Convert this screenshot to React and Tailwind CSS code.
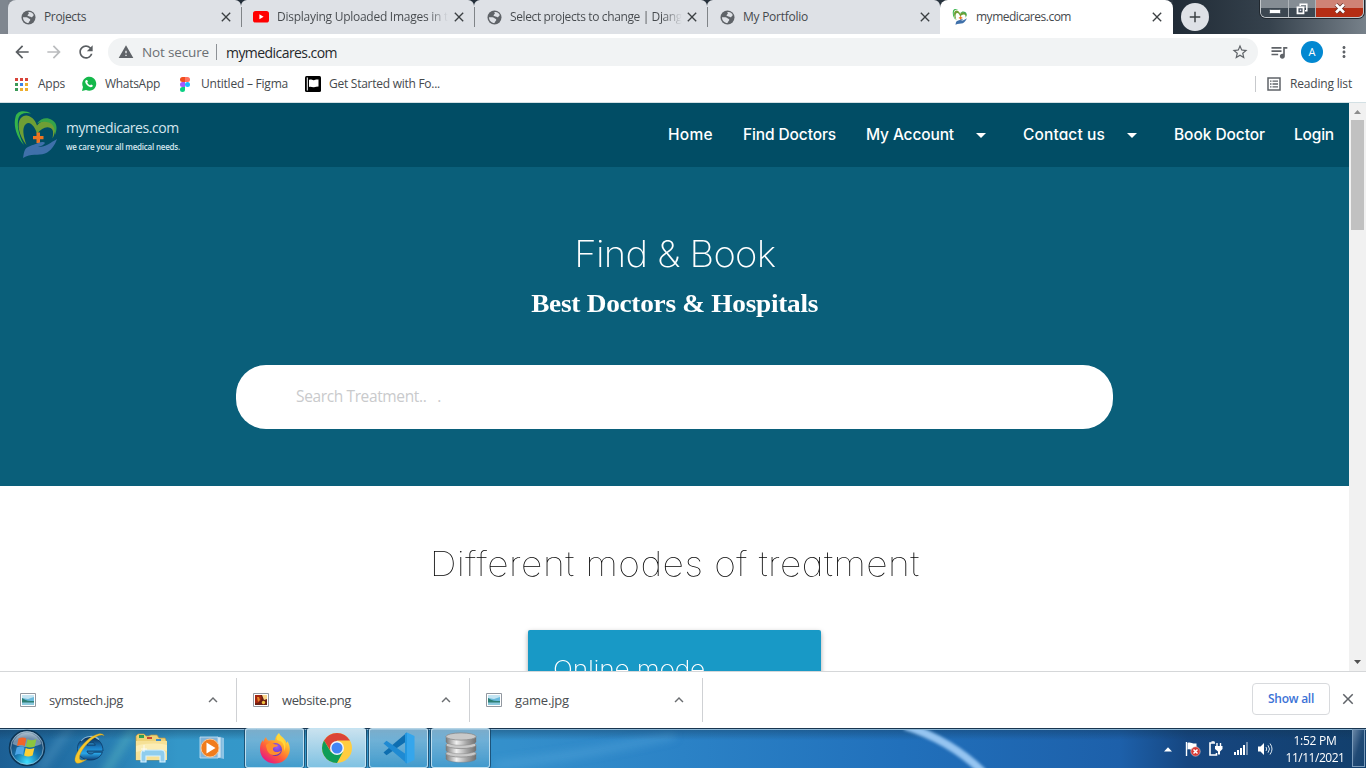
import { useLayoutEffect, useRef } from "react";
import {
  MdClose,
  MdArrowBack,
  MdArrowForward,
  MdRefresh,
  MdWarning,
  MdStarBorder,
  MdQueueMusic,
  MdMoreVert,
  MdKeyboardArrowUp,
  MdAdd,
} from "react-icons/md";

const UI = "font-['Open_Sans','Noto_Sans',sans-serif]";
const GEO = "font-['Inter',sans-serif] [font-feature-settings:'cv11']";

/* One line of text whose tracking is adjusted so it spans exactly `w` pixels.
   `stretch` is the horizontal scale that the class list applies, if any. */
function Fit({ w, stretch = 1, className = "", children }) {
  const ref = useRef(null);
  useLayoutEffect(() => {
    const el = ref.current;
    el.style.letterSpacing = "0px";
    const natural = el.getBoundingClientRect().width;
    const count = el.textContent.length;
    el.style.letterSpacing = `${(w - natural) / count / stretch}px`;
  }, [w, stretch]);
  return (
    <span ref={ref} className={`inline-block shrink-0 whitespace-pre ${className}`}>
      {children}
    </span>
  );
}

function HeartLogo({ className }) {
  return (
    <svg viewBox="0 0 45 48" className={className}>
      <path d="M10 34C3 27-1 15 1.500 6 3-.5 11-1 17 2.500 11 1 6 2.500 4.500 7 2.500 14 5 25 10 34z" fill="#35b44a" />
      <path d="M12.500 34C5 25 2.500 13 6.500 7.500c5-6.500 14-1.500 16.500 7 3.500-4.500 9-5.500 13-4 7 2 6 11 2.500 17 1-6 1-9-2-10.500-4-2-9 0-13.500 6C21.500 17 16.500 9.500 12 13c-4.500 3.500-2.500 13 .5 21z" fill="#6f9f35" />
      <path d="M23 12.500c4-5.500 10-6.500 15-3.500 6 3.500 5 10 3 15 0-7-2-11-6-12.500-4-1.300-8-.8-12 1z" fill="#35a44a" />
      <path d="M22.500 21.500h3.500v3.500h3.500v3.200h-3.500v3.800h-3.500v-3.800H19V25h3.500z" fill="#ee7421" />
      <path d="M9 47c1-5 1-9 5-11 5-2.500 7-2.500 10-4 3-1.300 6-1.500 7 0-1 2-4 3-7 4 7 .5 12-4 19-8-2 6-6 12-12 14.500C24 45 17 42 9 47z" fill="#3f70aa" />
    </svg>
  );
}

function GlobeIcon() {
  return (
    <svg viewBox="0 0 15 15" className="size-[15px]">
      <circle cx="7.500" cy="7.500" r="7" fill="#5f6368" />
      <path d="M7.200 2.200c2.500-.8 5 .8 5.700 3.300-.8 0-1.300.6-1.500 1.500-.8.4-1.800.2-2.300-.6-.9.2-2.200.2-2.500-.8C6.400 4.700 7.600 4.400 7.900 3.600z" fill="#dee1e6" />
      <path d="M2 7.300h3.500c1.500 0 1.700 1.200 2.800 1.400 1 .3 1.300 1.200.6 2-.6.700-1.100 1.500-1.400 2.400C4.400 13 1.900 10.500 2 7.300z" fill="#dee1e6" />
    </svg>
  );
}

function YoutubeIcon() {
  return (
    <svg viewBox="0 0 16 12" className="h-3 w-4">
      <rect width="16" height="11.5" rx="2.6" fill="#f00" />
      <path d="M6.4 3.3v5l4.2-2.5z" fill="#fff" />
    </svg>
  );
}

function Tab({ icon, title, w, fade, line, first }) {
  return (
    <div className={`relative flex h-[34px] w-[233px] shrink-0 items-center bg-[#dee1e6] pl-3 ${first ? "rounded-tl-lg" : "rounded-tl-md"} rounded-tr-md`}>
      {line && <span className="absolute left-0 top-[7px] h-5 w-px bg-[#808488]" />}
      <span className="flex w-4 justify-center">{icon}</span>
      <div className="ml-2 flex h-5 w-[173px] items-center">
        <Fit w={w} className={`text-[12px] leading-5 ${fade ? "bg-linear-to-r from-[#45494d] from-88% to-[#dee1e6] to-100% bg-clip-text text-transparent" : "text-[#45494d]"}`}>
          {title}
        </Fit>
      </div>
      <MdClose className="ml-px size-4 text-[#3c4043]" />
    </div>
  );
}

function TabStrip() {
  return (
    <div className="flex h-[34px] bg-linear-to-r from-[#828890] from-0% via-[#222c37] via-10% to-[#2b3641]">
      <div className="h-[34px] w-2 shrink-0 rounded-br-lg bg-[#7f868f]" />
      <Tab first icon={<GlobeIcon />} title="Projects" w={42} />
      <Tab line icon={<YoutubeIcon />} title="Displaying Uploaded Images in t" w={171} fade />
      <Tab line icon={<GlobeIcon />} title="Select projects to change | Djang" w={172} fade />
      <Tab line icon={<GlobeIcon />} title="My Portfolio" w={65} />
      <div className="flex h-[34px] w-[233px] shrink-0 items-center rounded-t-lg bg-white pl-3">
        <HeartLogo className="size-4" />
        <Fit w={95} className="ml-2 text-[12px] text-[#45494d]">mymedicares.com</Fit>
        <MdClose className="ml-[78px] size-4 text-[#3c4043]" />
      </div>
      <div className="flex flex-1 bg-linear-to-r from-[#202b36] via-[#36424d] to-[#77818a]">
        <div className="ml-2 mt-[3px] flex size-7 shrink-0 items-center justify-center rounded-full bg-[#dee1e6]">
          <MdAdd className="size-[18px] text-[#3c4043]" />
        </div>
        <div className="ml-[51px] flex h-[18px] w-[104px] overflow-hidden rounded-b-md border border-t-0 border-[#c3c8cc] ring-1 ring-[#20272e]">
          <div className="flex w-[28px] items-center justify-center border-r border-[#aeb4b9] bg-linear-to-b from-[#858d94] from-50% to-[#3c4751] to-50%">
            <svg viewBox="0 0 12 5" className="mt-1.5 h-[5px] w-3"><rect x=".5" y=".5" width="11" height="4" rx="1" fill="#fff" stroke="#555e66" /></svg>
          </div>
          <div className="flex w-[27px] items-center justify-center border-r border-[#aeb4b9] bg-linear-to-b from-[#858d94] from-50% to-[#3c4751] to-50%">
            <svg viewBox="0 0 12 12" className="h-3 w-3"><path d="M4.2 3V1.2h6.6v6.6H9" fill="none" stroke="#fff" strokeWidth="1.5" /><path d="M1.5 4.3h6v6h-6z" fill="#46515b" stroke="#fff" strokeWidth="1.8" /><path d="M3.8 6.6h1.5v1.5H3.8z" fill="#dde" /></svg>
          </div>
          <div className="flex flex-1 items-center justify-center bg-linear-to-b from-[#cf8375] from-50% to-[#b52d14] to-50%">
            <svg viewBox="0 0 12 11" className="h-[11px] w-3"><path d="M2 1.5l8 8M10 1.5l-8 8" stroke="#663029" strokeWidth="4" /><path d="M2 1.5l8 8M10 1.5l-8 8" stroke="#fff" strokeWidth="2.6" /></svg>
          </div>
        </div>
      </div>
    </div>
  );
}

function Toolbar() {
  return (
    <div className="flex h-9 items-center bg-white">
      <MdArrowBack className="ml-[12px] size-5 text-[#5a5e62]" />
      <MdArrowForward className="ml-[12px] size-5 text-[#babcbe]" />
      <MdRefresh className="ml-[12px] size-5 text-[#5a5e62]" />
      <div className="ml-[12px] flex h-7 w-[1150px] items-center rounded-full bg-[#f1f3f4]">
        <MdWarning className="ml-[10px] size-4 text-[#5f6368]" />
        <Fit w={67} className="ml-2 text-[13.5px] text-[#6b6f73]">Not secure</Fit>
        <span className="ml-[7px] h-4 w-px bg-[#8d9196]" />
        <Fit w={111} className="ml-[9px] text-[14px] text-[#26292c]">mymedicares.com</Fit>
        <MdStarBorder className="ml-auto mr-[9px] size-[18px] text-[#5f6368]" />
      </div>
      <MdQueueMusic className="ml-[11px] size-5 text-[#5f6368]" />
      <span className="ml-[12px] flex size-[22px] items-center justify-center rounded-full bg-[#0288d1] text-[11px] text-white">A</span>
      <MdMoreVert className="ml-[12px] size-[18px] text-[#5f6368]" />
    </div>
  );
}

function AppsIcon() {
  const colors = ["#d8443a", "#d8443a", "#d8443a", "#3b9a58", "#3b82e8", "#eeae2e", "#3b9a58", "#eeae2e", "#eeae2e"];
  return (
    <span className="ml-[15px] grid grid-cols-3 gap-[2px]">
      {colors.map((c, i) => (
        <span key={i} className="size-[3px]" style={{ backgroundColor: c }} />
      ))}
    </span>
  );
}

function Bookmarks() {
  const label = "text-[12px] text-[#45494d]";
  return (
    <div className="flex h-[33px] items-center border-b border-[#d3e0e4] bg-white pb-1">
      <AppsIcon />
      <Fit w={27} className={`ml-[10px] ${label}`}>Apps</Fit>
      <svg viewBox="0 0 16 16" className="ml-[16px] size-4">
        <path d="M1 15l1-4a7 7 0 1 1 3 3z" fill="#14b84b" />
        <path d="M5 4.3c.6-.6 1.1-.4 1.4.3l.5 1c.1.5-.7.9-.6 1.2.6 1.1 1.4 1.900 2.600 2.400.4.1.8-1 1.200-.8l1.500.8c.4.3-.1 1.700-.9 1.900C8 11.800 4 8 4.200 5.600c0-.5.4-1 .8-1.300z" fill="#fff" />
      </svg>
      <Fit w={55} className={`ml-[8px] ${label}`}>WhatsApp</Fit>
      <svg viewBox="0 0 10 15" className="ml-[20px] h-[15px] w-[10px]">
        <path d="M2.500 0H5v5H2.500a2.500 2.500 0 0 1 0-5z" fill="#f24e1e" />
        <path d="M5 0h2.500a2.500 2.500 0 0 1 0 5H5z" fill="#ff7262" />
        <path d="M2.500 5H5v5H2.500a2.500 2.500 0 0 1 0-5z" fill="#a259ff" />
        <circle cx="7.500" cy="7.500" r="2.500" fill="#1abcfe" />
        <path d="M2.500 10H5v2.500A2.500 2.500 0 1 1 2.500 10z" fill="#0acf83" />
      </svg>
      <Fit w={87} className={`ml-[11px] ${label}`}>Untitled – Figma</Fit>
      <svg viewBox="0 0 16 16" className="ml-[17px] size-4">
        <rect width="16" height="16" rx="1.500" fill="#000" />
        <path d="M2.300 1.500v13" stroke="#fff" strokeWidth="1" />
        <path d="M4 4c2-1.500 3.500.8 5.500 0s2.500-.5 4-.6v7.100c-1.500.2-3 .3-4.500.7-1.800.4-3-1-5-.2z" fill="#fff" />
      </svg>
      <Fit w={111} className={`ml-2 ${label}`}>Get Started with Fo...</Fit>
      <span className="ml-auto h-4 w-px bg-[#c7c9cc]" />
      <svg viewBox="0 0 14 14" className="ml-[11px] size-[14px]">
        <path d="M1 1h12v12H1z" fill="none" stroke="#5f6368" strokeWidth="1.500" />
        <path d="M3 4.200h1.500M3 7h1.500M3 9.800h1.500M5.500 4.200H11M5.500 7H11M5.500 9.800H11" stroke="#5f6368" strokeWidth="1.300" />
      </svg>
      <Fit w={62} className={`ml-[9px] mr-[14px] ${label}`}>Reading list</Fit>
    </div>
  );
}

function Caret({ className }) {
  return (
    <svg viewBox="0 0 10 5" className={`h-[5px] w-[10px] ${className}`}>
      <path d="M0 0h10L5 5z" fill="#fff" />
    </svg>
  );
}

function SiteHeader() {
  return (
    <header className="flex h-16 items-center bg-[#014d65]">
      <HeartLogo className="ml-[14px] h-[48px] w-[45px]" />
      <div className="ml-[7px] flex flex-col text-[#d4e6ee]">
        <Fit w={114} className="text-[14px] font-medium leading-[19px]">mymedicares.com</Fit>
        <Fit w={114} className="mt-[3px] text-[8px] font-semibold leading-[13px]">we care your all medical needs.</Fit>
      </div>
      <nav className={`${GEO} ml-auto mr-[15px] flex items-center text-[15.5px] font-medium text-white`}>
        <Fit w={45}>Home</Fit>
        <Fit w={93} className="ml-[30px]">Find Doctors</Fit>
        <Fit w={88} className="ml-[30px]">My Account</Fit>
        <Caret className="ml-[22px]" />
        <Fit w={82} className="ml-[37px]">Contact us</Fit>
        <Caret className="ml-[22px]" />
        <Fit w={91} className="ml-[37px]">Book Doctor</Fit>
        <Fit w={40} className="ml-[29px]">Login</Fit>
      </nav>
    </header>
  );
}

function Page() {
  return (
    <div className="flex h-[568px] overflow-hidden">
      <main className="h-[568px] w-[1349px] shrink-0 overflow-hidden bg-white">
        <SiteHeader />
        <section className="flex h-[319px] flex-col items-center bg-[#0a5f7a] text-white">
          <h1 className={`${GEO} mt-[62px] h-[50px] text-[36px] font-extralight leading-[50px]`}>
            <Fit w={201} stretch={1.06} className="scale-x-[1.06]">Find &amp; Book</Fit>
          </h1>
          <h2 className="mt-[7px] h-9 font-['Liberation_Serif',serif] text-[26px] font-bold leading-9">
            <Fit w={287} stretch={1.05} className="scale-x-[1.05]">Best Doctors &amp; Hospitals</Fit>
          </h2>
          <div className="mt-[43px] flex h-16 w-[877px] items-center rounded-[30px] bg-white pl-[60px]">
            <Fit w={145} className="text-[15.5px] text-[#c9cacc]">{"Search Treatment..   ."}</Fit>
          </div>
        </section>
        <section className="flex flex-col items-center">
          <h2 className={`${GEO} mt-[53px] h-[50px] text-[34px] font-thin leading-[50px] text-black`}>
            <Fit w={490} stretch={1.1} className="scale-x-110">Different modes of treatment</Fit>
          </h2>
          <div className="mt-[41px] h-60 w-[293px] rounded-[2px] bg-[#1899c6] pl-[25px] pt-[22px] shadow-[0_2px_5px_rgba(0,0,0,.35)]">
            <Fit w={152} stretch={1.1} className={`${GEO} origin-left scale-x-110 text-[24px] font-extralight leading-9 text-white`}>Online mode</Fit>
          </div>
        </section>
      </main>
      <div className="flex w-[17px] flex-col items-center bg-[#f1f1f1]">
        <svg viewBox="0 0 7 4" className="mt-[7px] h-1 w-[7px]"><path d="M0 4h7L3.500 0z" fill="#8c8c8c" /></svg>
        <div className="mt-[6px] h-[110px] w-[13px] bg-[#c1c1c1]" />
        <svg viewBox="0 0 7 4" className="mb-[7px] mt-auto h-1 w-[7px]"><path d="M0 0h7L3.500 4z" fill="#505050" /></svg>
      </div>
    </div>
  );
}

function PictureIcon({ warm }) {
  return (
    <svg viewBox="0 0 16 14" className="h-[14px] w-4">
      <path d="M.5.500h15v13H.500z" fill="#fff" stroke="#9298a0" />
      <path d="M2 2h12v10H2z" fill={warm ? "#6b1f12" : "#69b9dc"} />
      {warm ? (
        <>
          <path d="M2 2h5c2 1 2 3 1 5L5 10H2z" fill="#a3260f" />
          <path d="M4 4h2l1 3-2 2z" fill="#e8862a" />
          <path d="M9 2h5v4l-3 1z" fill="#f8d58a" />
          <circle cx="10.500" cy="9.500" r="1.700" fill="#f0c040" />
        </>
      ) : (
        <>
          <path d="M2 2h12v2L8 6 2 5z" fill="#c3e4f2" />
          <path d="M2 5c4 3 8 3 12 3v2H2z" fill="#2d7f74" />
          <path d="M2 9.500h12V12H2z" fill="#8cc9de" />
        </>
      )}
    </svg>
  );
}

function Download({ name, w, warm, first }) {
  return (
    <div className={`flex h-[44px] shrink-0 items-center border-r border-[#cfd1d4] ${first ? "w-[237px] pl-5" : "w-[233px] pl-4"}`}>
      <PictureIcon warm={warm} />
      <Fit w={w} className="ml-[13px] pt-[2px] text-[13px] text-[#4a4d51]">{name}</Fit>
      <MdKeyboardArrowUp className="ml-auto mr-[14px] size-[18px] text-[#6a6d70]" />
    </div>
  );
}

function DownloadBar() {
  return (
    <div className="flex h-[57px] items-center border-t border-[#d5d7d9] bg-white">
      <Download first name="symstech.jpg" w={74} />
      <Download name="website.png" w={69} warm />
      <Download name="game.jpg" w={54} />
      <button className="mb-[2px] ml-auto flex h-8 w-[78px] items-center justify-center rounded-[4px] border border-[#d8dadd] bg-white text-[12px] font-semibold text-[#3c72d6]">
        <Fit w={46}>Show all</Fit>
      </button>
      <MdClose className="mb-[2px] ml-[9px] mr-[9px] size-[18px] text-[#5f6368]" />
    </div>
  );
}

function TaskButton({ active, children }) {
  return (
    <div className={`mr-[3px] flex h-10 w-[59px] items-center justify-center rounded-[3px] border border-[#d5ebf6]/80 ring-1 ring-[#123a58]/70 ${active ? "bg-linear-to-b from-[#c9e2ef] to-[#7fc2e2]" : "bg-linear-to-b from-[#a2c9e0]/70 to-[#4ba0ce]/60"}`}>
      {children}
    </div>
  );
}

function StartOrb() {
  return (
    <svg viewBox="0 0 38 38" className="ml-2 size-[38px]">
      <defs>
        <radialGradient id="orb" cx=".5" cy=".9" r=".9">
          <stop offset="0" stopColor="#3fe0ff" />
          <stop offset=".4" stopColor="#1674ac" />
          <stop offset=".75" stopColor="#1b4a74" />
          <stop offset="1" stopColor="#9db5c6" />
        </radialGradient>
      </defs>
      <circle cx="19" cy="19" r="17.500" fill="url(#orb)" stroke="#0d3555" strokeWidth="1.500" />
      <circle cx="19" cy="19" r="16.300" fill="none" stroke="#b9d3e2" strokeWidth=".8" opacity=".7" />
      <path d="M4.500 15a15 15 0 0 1 29 0c-8 4-21 4-29 0z" fill="#fff" opacity=".38" />
      <path d="M10.500 9.500c3-1.500 5.500-1.300 7.800 0L16.800 17c-2.500-1.300-5-1.200-7.800 0z" fill="#f0652a" />
      <path d="M19.500 10.300c2.500 1.300 5.500 1.200 9-.3L26.700 17.500c-3 1.300-6 1.500-8.700.1z" fill="#8cc63f" />
      <path d="M8.700 18.400c2.800-1.200 5.300-1.300 7.800 0L14.900 26c-2.500-1.400-5-1.200-8 .2z" fill="#4da6e8" />
      <path d="M17.700 19c2.600 1.400 5.500 1.200 8.700-.1l-1.800 7.600c-3 1.300-5.800 1.400-8.500 0z" fill="#fcd034" />
    </svg>
  );
}

function ExplorerE() {
  return (
    <svg viewBox="0 0 34 34" className="ml-[26px] size-[34px]">
      <defs>
        <linearGradient id="ie" x1="0" y1="0" x2="0" y2="1">
          <stop offset="0" stopColor="#0d2f55" />
          <stop offset=".45" stopColor="#1b7fc6" />
          <stop offset=".7" stopColor="#2aa6e6" />
          <stop offset="1" stopColor="#0f3f78" />
        </linearGradient>
      </defs>
      <path d="M31 20H15c.4 3.500 5.500 4 7.300 1.200h8C27 32.500 5.500 32 5.500 17.500S31 1.500 31 20zM15 14.200h8.300c-.6-3.800-7.500-3.800-8.300 0z" fill="url(#ie)" stroke="#0d3a66" strokeWidth=".8" />
      <path d="M9 10c4-5 13-6.500 18-1.500" fill="none" stroke="#b4dcf4" strokeWidth="1.200" opacity=".7" />
      <path d="M32 5c-1-4-9-2.500-17 4.500S1 27 3.500 31c1.500 2.500 6 1 11-2.500C9.500 30 7 29.500 7.500 26 8 21 14 13 20.500 8S31 3.500 32 5z" fill="#f5c72e" stroke="#c2921c" strokeWidth=".4" />
    </svg>
  );
}

function FolderIcon() {
  return (
    <svg viewBox="0 0 34 32" className="ml-[28px] h-8 w-[34px]">
      <path d="M2 28V4l2-2h6l2 2h3l2-1h6l2 3h6l1 2v20z" fill="#eed276" stroke="#b79440" strokeWidth=".7" />
      <path d="M5 3h5v3H5z" fill="#2f9e55" /><path d="M13 5h5v2h-5z" fill="#c94731" /><path d="M22 7h5v2h-5z" fill="#3a8bc9" />
      <path d="M2 9h31v19H2z" fill="#f6e196" />
      <path d="M2 14c10-3 20-3 31-1v6c-11-3-21-2-31 1z" fill="#fbedb4" />
      <path d="M7 30v-8c0-3 2-4 4-4h16c3 0 4 2 4 4v8h-5v-6H12v6z" fill="#8fcdee" stroke="#d5f1ff" strokeWidth="1.200" />
      <path d="M10 13v7M7 17h6" stroke="#fff" strokeWidth=".8" />
    </svg>
  );
}

function MediaPlayerIcon() {
  return (
    <svg viewBox="0 0 28 24" className="ml-[31px] h-6 w-7">
      <path d="M21 1l4 1v21l-4-1z" fill="#9fcdea" opacity=".85" />
      <path d="M18 1h4v21h-4z" fill="#cfe6f4" stroke="#5d98c4" strokeWidth=".5" />
      <path d="M1 1h18v21H1z" fill="#7fb4da" stroke="#c8e2f4" strokeWidth=".8" />
      <circle cx="11" cy="12" r="9" fill="#f07c1d" stroke="#f8c695" strokeWidth="1" />
      <path d="M7.500 6.500v11l9-5.500z" fill="#fff" />
    </svg>
  );
}

function FirefoxIcon() {
  return (
    <svg viewBox="0 0 32 32" className="size-8">
      <defs>
        <linearGradient id="ff" x1=".85" y1=".05" x2=".2" y2=".95">
          <stop offset="0" stopColor="#fff04a" /><stop offset=".35" stopColor="#ffa52a" /><stop offset=".65" stopColor="#ff5a3c" /><stop offset="1" stopColor="#e31587" />
        </linearGradient>
        <radialGradient id="fp" cx=".6" cy=".3" r=".8">
          <stop offset="0" stopColor="#9a5cf5" /><stop offset="1" stopColor="#5a2ca8" />
        </radialGradient>
      </defs>
      <path d="M20 1c1 3 4 4 6 7 1 1 1 2 1.500 3 1-1 .7-2 .7-2 3 4 3 9 2 12C28 28 22 32 15 31.500 7 31 1 25 1 17c0-4 1-7 3-9 0 0 0 1 .6 2C5 7 6.500 6 7 5c.3 2 1.500 3.300 3 3.800 2-.7 4-.6 6-.2C16 5 18 3 20 1z" fill="url(#ff)" />
      <circle cx="16.500" cy="17.500" r="6.500" fill="url(#fp)" />
      <path d="M7 13c3-3 7-2 9-.5 3 .2 4 1.500 1 2.200-2 0-3.500 1.300-3 3 1 3 5 3 8 1-2 6-12 6-14-1-.5-2-1-3-1-4.700z" fill="#ff8f2c" />
      <path d="M18 8c6 1 8 5 7 11 2-3 2-8-1-11-2-2-3-4-4-6-2 2-3 4-2 6z" fill="#ffda3a" />
    </svg>
  );
}

function ChromeIcon() {
  return (
    <svg viewBox="0 0 30 30" className="size-[30px]">
      <circle cx="15" cy="15" r="15" fill="#ffcd40" />
      <path d="M9 18.500L2.010 7.500A15 15 0 0 1 27.990 7.500H15z" fill="#db4437" />
      <path d="M21.200 18.500L15 30A15 15 0 0 1 2.010 7.500L8.800 18.800z" fill="#0f9d58" />
      <circle cx="15" cy="15" r="7" fill="#f1f5f8" />
      <circle cx="15" cy="15" r="5.500" fill="#4285f4" />
    </svg>
  );
}

function CodeIcon() {
  return (
    <svg viewBox="0 0 32 32" className="size-8">
      <path d="M.5 20.500l3 2.800L24 9V.500z" fill="#0e6eb0" />
      <path d="M.5 11.500l3-2.800L24 23v8.500z" fill="#1f8ad2" />
      <path d="M24 .500l7.500 3.500v24L24 31.500z" fill="#35a6ec" />
      <path d="M22 1.500l2-1v31l-2-1z" fill="#2397df" />
    </svg>
  );
}

function DatabaseIcon() {
  return (
    <svg viewBox="0 0 32 32" className="size-8">
      <defs>
        <linearGradient id="db"><stop offset="0" stopColor="#7a7a7a" /><stop offset=".35" stopColor="#f0f0f0" /><stop offset=".7" stopColor="#a3a3a3" /><stop offset="1" stopColor="#707070" /></linearGradient>
      </defs>
      {[21.500, 13, 4.500].map((y) => (
        <g key={y}>
          <path d={`M1 ${y}v5c0 5 30 5 30 0v-5z`} fill="url(#db)" stroke="#777" strokeWidth=".4" />
          <ellipse cx="16" cy={y} rx="15" ry="3.600" fill="#c9c9c9" stroke="#8b8b8b" strokeWidth=".8" />
        </g>
      ))}
    </svg>
  );
}

function TaskbarBackdrop() {
  return (
    <svg viewBox="0 0 1366 40" preserveAspectRatio="none" className="absolute inset-0 h-full w-full">
      <defs>
        <linearGradient id="tb">
          <stop offset="0" stopColor="#1c5f94" /><stop offset=".06" stopColor="#2474aa" /><stop offset=".13" stopColor="#3497c8" /><stop offset=".25" stopColor="#3498cb" /><stop offset=".38" stopColor="#348fcb" />
          <stop offset=".5" stopColor="#2b82c6" /><stop offset=".66" stopColor="#2170bb" /><stop offset=".82" stopColor="#1d60aa" /><stop offset=".87" stopColor="#164680" /><stop offset="1" stopColor="#123f6c" />
        </linearGradient>
        <linearGradient id="tt" x1="0" y1="0" x2="0" y2="1">
          <stop offset="0" stopColor="#12334f" stopOpacity=".45" /><stop offset=".3" stopColor="#12334f" stopOpacity="0" />
        </linearGradient>
        <filter id="soft" x="-20%" y="-50%" width="140%" height="200%"><feGaussianBlur stdDeviation="1.500" /></filter>
        <filter id="softer" x="-50%" y="-50%" width="200%" height="200%"><feGaussianBlur stdDeviation="4" /></filter>
      </defs>
      <path d="M0 0h1366v40H0z" fill="url(#tb)" />
      <g filter="url(#softer)" fill="none">
        <path d="M40 42L72-4" stroke="#67a9cf" strokeWidth="7" opacity=".4" />
        <path d="M104 46L136-4" stroke="#75d4c5" strokeWidth="6" opacity=".45" />
        <path d="M495 37q80-8 180-30" stroke="#68b4e4" strokeWidth="7" opacity=".35" />
      </g>
      <path d="M0 0h1366v40H0z" fill="url(#tt)" />
      <path d="M905-2q45 14 78 46" stroke="#95c5f1" strokeWidth="8" fill="none" filter="url(#soft)" />
      <path d="M0 .5h1366" stroke="#19354f" />
      <path d="M0 1.500h1366" stroke="#8bb6d5" />
    </svg>
  );
}

function Tray() {
  return (
    <div className="ml-auto flex h-10 items-center">
      <svg viewBox="0 0 8 5" className="mt-[2px] h-[5px] w-2"><path d="M0 4.500h8L4 .3z" fill="#fff" /></svg>
      <svg viewBox="0 0 16 16" className="ml-[13px] mt-[2px] size-4">
        <path d="M1.500 1v14" stroke="#fff" strokeWidth="1.400" />
        <path d="M2.500 2c3-1.500 4 1 9 .5V9c-4 .5-6-1.500-9-.5z" fill="#fff" />
        <circle cx="10.500" cy="10.500" r="4.700" fill="#d83a34" stroke="#eee" strokeWidth=".5" />
        <path d="M8.500 8.500l4 4M12.500 8.500l-4 4" stroke="#fff" strokeWidth="1.500" />
      </svg>
      <svg viewBox="0 0 14 16" className="ml-[8px] mt-[2px] h-4 w-[14px]">
        <path d="M6 2H1v12h6.500v-2" fill="none" stroke="#fff" strokeWidth="1.600" />
        <path d="M2.500 1h3" stroke="#fff" strokeWidth="1.500" />
        <path d="M8 2v3M11.500 2v3" stroke="#fff" strokeWidth="1.400" />
        <path d="M6 5h7.500v3L11 10.500v3H9v-3L6 8z" fill="#fff" />
      </svg>
      <svg viewBox="0 0 15 14" className="ml-[11px] mt-px h-[14px] w-[15px]" fill="#fff">
        <rect x="0" y="10" width="2" height="3" /><rect x="3" y="8" width="2" height="5" /><rect x="6" y="6" width="2" height="7" /><rect x="9" y="3" width="2" height="10" /><rect x="12" y="0" width="2" height="13" opacity=".4" />
      </svg>
      <svg viewBox="0 0 16 14" className="ml-[8px] mt-px h-[14px] w-4">
        <path d="M1 4.500h2.500L7 1v12L3.500 9.500H1z" fill="#fff" />
        <path d="M9 5q1.500 2 0 4M11 3.300q3 3.700 0 7.400M13 1.500q4 5.500 0 11" fill="none" stroke="#dce8f2" strokeWidth="1" />
      </svg>
      <div className="ml-[12px] mt-[2px] flex w-[60px] flex-col items-center text-[12px] leading-[17px] text-white">
        <Fit w={43}>1:52 PM</Fit>
        <Fit w={59}>11/11/2021</Fit>
      </div>
      <div className="ml-[7px] mr-px h-[38px] w-[13px] border border-[#7a9bbb] bg-linear-to-br from-[#6886a5] via-[#214a75] to-[#15416e]" />
    </div>
  );
}

function Taskbar() {
  return (
    <div className="relative h-10 overflow-hidden">
      <TaskbarBackdrop />
      <div className="relative flex h-10 items-center">
        <StartOrb />
        <ExplorerE />
        <FolderIcon />
        <MediaPlayerIcon />
        <div className="ml-[18px] flex">
          <TaskButton><FirefoxIcon /></TaskButton>
          <TaskButton active><ChromeIcon /></TaskButton>
          <TaskButton><CodeIcon /></TaskButton>
          <TaskButton><DatabaseIcon /></TaskButton>
        </div>
        <Tray />
      </div>
    </div>
  );
}

export default function App() {
  return (
    <div className={`${UI} h-[768px] w-[1366px] overflow-hidden bg-white`}>
      <TabStrip />
      <Toolbar />
      <Bookmarks />
      <Page />
      <DownloadBar />
      <Taskbar />
    </div>
  );
}
